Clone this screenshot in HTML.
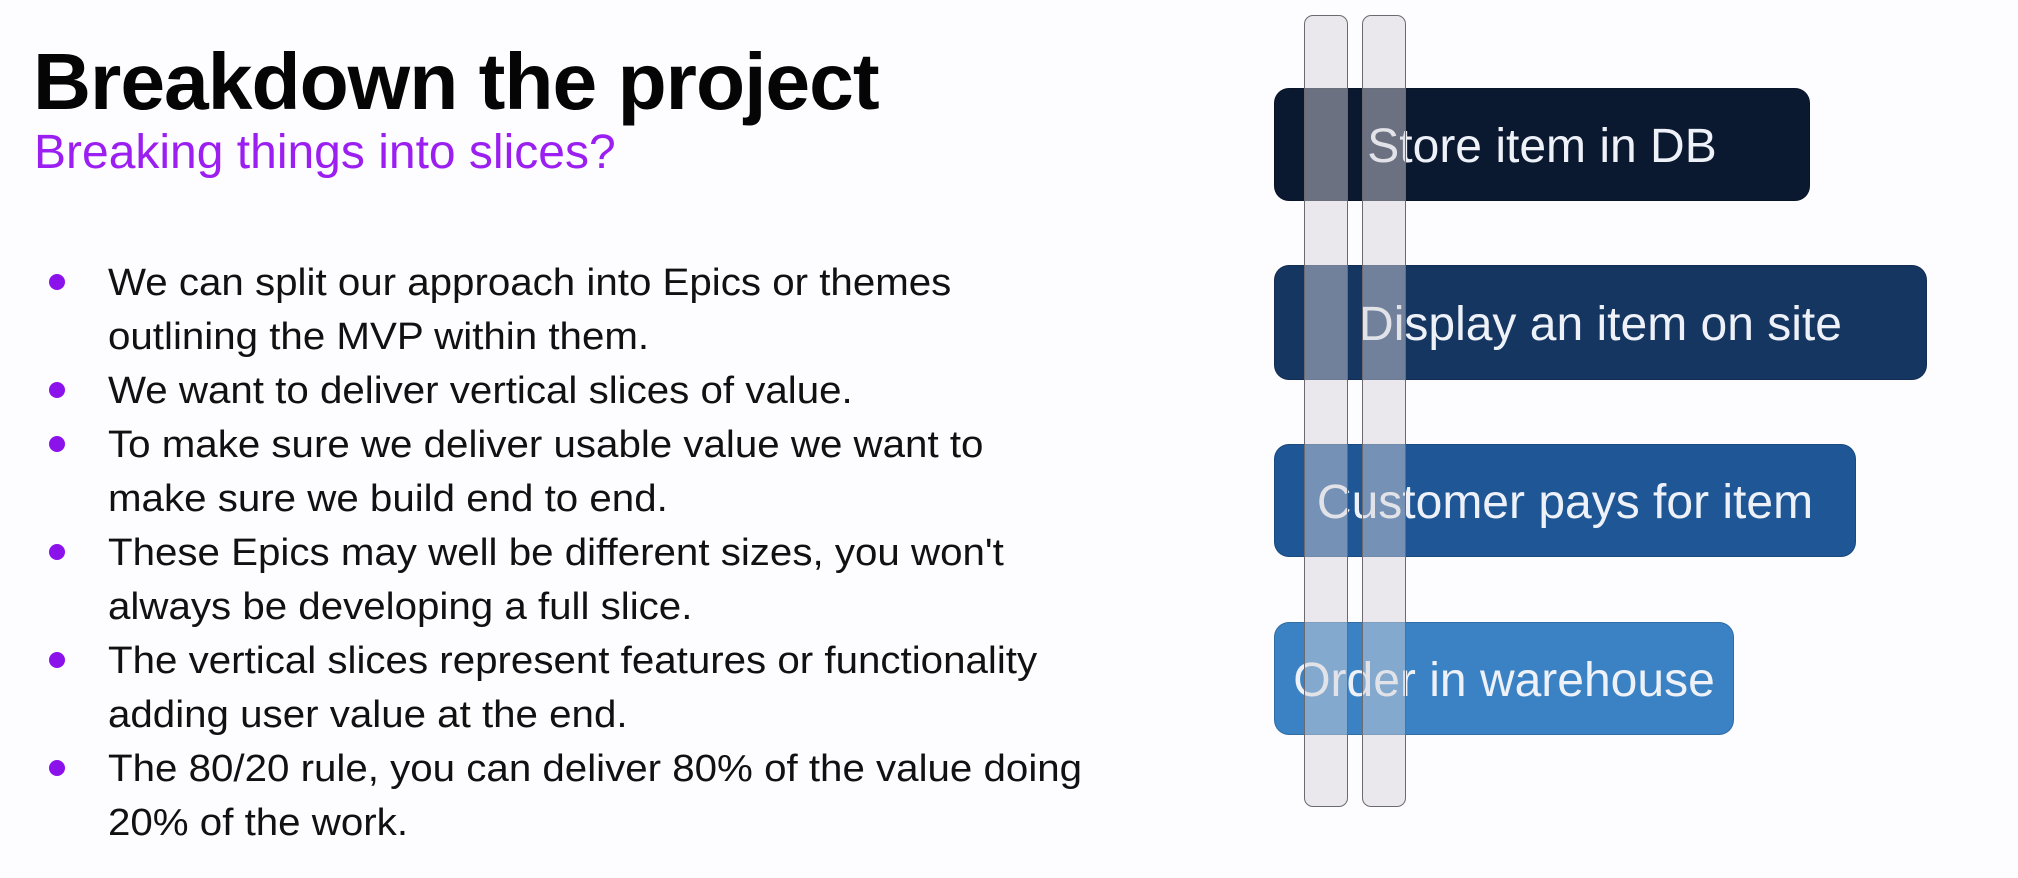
<!DOCTYPE html>
<html><head><meta charset="utf-8"><style>
html,body{margin:0;padding:0;}
body{width:2018px;height:878px;background:#fdfcfe;position:relative;overflow:hidden;font-family:"Liberation Sans",sans-serif;}
.title{position:absolute;left:33px;top:32px;font-weight:bold;font-size:80px;line-height:100px;color:#050505;transform-origin:0 0;transform:scaleX(1.005);white-space:nowrap;letter-spacing:-1px}
.sub{position:absolute;left:34px;top:125px;font-size:48px;line-height:56px;color:#9b1ff0;white-space:nowrap;transform-origin:0 0;transform:scaleX(1.0)}
.list{position:absolute;left:0;top:256px;}
.line{position:absolute;left:108px;font-size:38px;line-height:54px;height:54px;color:#111;white-space:nowrap;transform-origin:0 0;transform:scaleX(1.06)}
.dot{position:absolute;left:49px;width:16px;height:16px;border-radius:50%;background:#8c12ec;}
.box{position:absolute;left:1274px;border-radius:15px;color:#eef2f8;font-size:48px;display:flex;align-items:center;justify-content:center;border:1px solid rgba(0,0,0,0.15);box-sizing:border-box;padding-top:3px}
.bar{position:absolute;top:15px;height:792px;width:44px;border:1.5px solid #6a6a70;border-radius:9px;background:rgba(213,211,218,0.48);box-sizing:border-box}
</style></head><body>
<div class="title">Breakdown the project</div>
<div class="sub">Breaking things into slices?</div>
<div class="list">
<div class="dot" style="top:18px"></div>
<div class="line" style="top:0">We can split our approach into Epics or themes</div>
<div class="line" style="top:54px">outlining the MVP within them.</div>
<div class="dot" style="top:126px"></div>
<div class="line" style="top:108px">We want to deliver vertical slices of value.</div>
<div class="dot" style="top:180px"></div>
<div class="line" style="top:162px">To make sure we deliver usable value we want to</div>
<div class="line" style="top:216px">make sure we build end to end.</div>
<div class="dot" style="top:288px"></div>
<div class="line" style="top:270px">These Epics may well be different sizes, you won't</div>
<div class="line" style="top:324px">always be developing a full slice.</div>
<div class="dot" style="top:396px"></div>
<div class="line" style="top:378px">The vertical slices represent features or functionality</div>
<div class="line" style="top:432px">adding user value at the end.</div>
<div class="dot" style="top:504px"></div>
<div class="line" style="top:486px">The 80/20 rule, you can deliver 80% of the value doing</div>
<div class="line" style="top:540px">20% of the work.</div>
</div>
<div class="box" style="top:88px;width:536px;height:113px;background:#0a1830">Store item in DB</div>
<div class="box" style="top:265px;width:653px;height:115px;background:#163662">Display an item on site</div>
<div class="box" style="top:444px;width:582px;height:113px;background:#1e5696">Customer pays for item</div>
<div class="box" style="top:622px;width:460px;height:113px;background:#3a82c4">Order in warehouse</div>
<div class="bar" style="left:1304px"></div>
<div class="bar" style="left:1362px"></div>
</body></html>
